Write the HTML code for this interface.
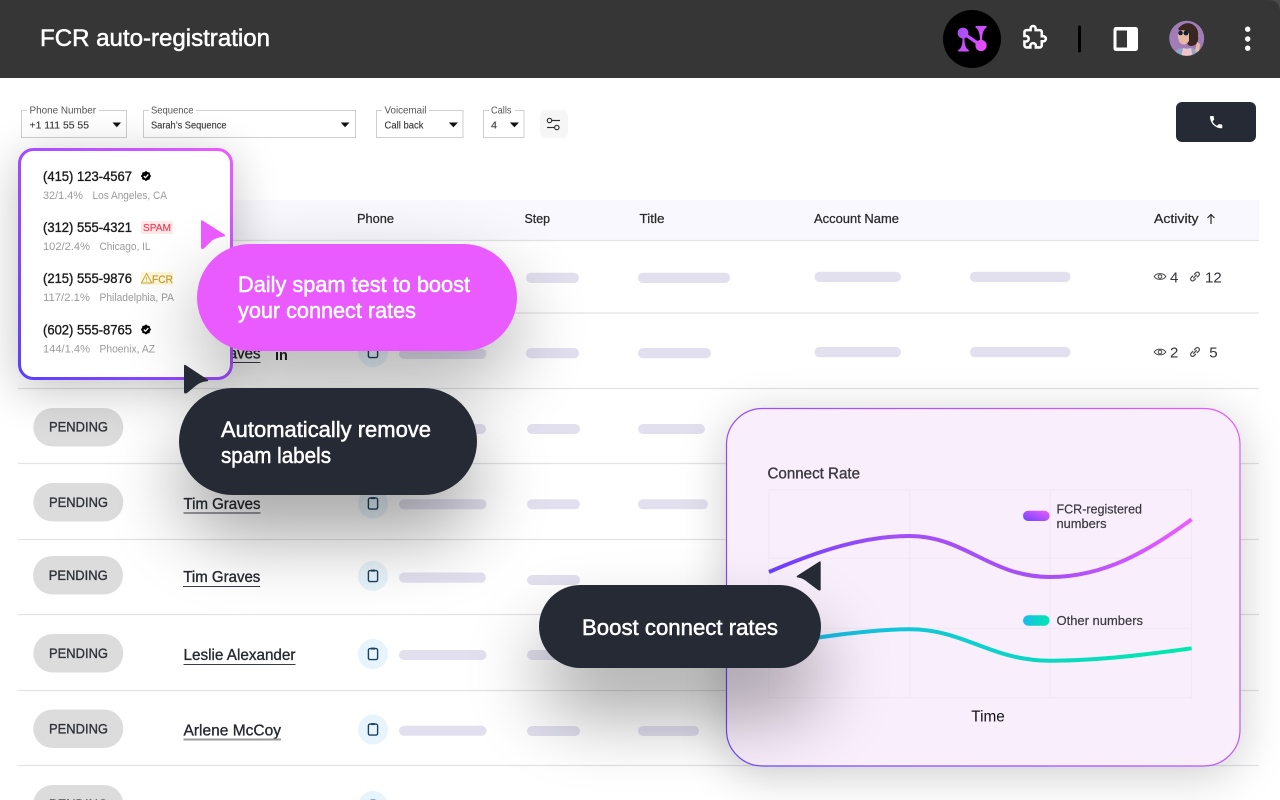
<!DOCTYPE html>
<html lang="en"><head><meta charset="utf-8"><title>FCR auto-registration</title>
<style>
html,body{margin:0;padding:0;background:#fff;width:1280px;height:800px;overflow:hidden}
svg{display:block;position:absolute;left:0;top:0}
text{font-family:"Liberation Sans",sans-serif;white-space:pre}
.m{stroke-width:.35px}
.t{stroke-width:.5px}
.lab{font-size:10.5px;fill:#555}
.val{font-size:10.5px;fill:#333;stroke:#333;stroke-width:.1px}
.hd{font-size:13px;fill:#2a2a2a;stroke:#2a2a2a;stroke-width:.25px}
.pn{font-size:13.5px;fill:#1b1b1b;stroke:#1b1b1b}
.sb{font-size:11px;fill:#9b9b9b}
.pd{font-size:14px;fill:#2f3238;stroke:#2f3238}
.nm{font-size:16px;fill:#26292f;stroke:#26292f}
.wt{font-size:22.5px;fill:#fff;stroke:#fff}
.act{font-size:15px;fill:#30333a}
.b{fill:#e2e0ef}
.c{fill:#e8f4fb}
.ph{fill:none;stroke:#1e4060;stroke-width:1.4}
.ln{stroke:#e3e3e6;stroke-width:1.2}
.gr{stroke:#f1e7f4;stroke-width:1;fill:none}
</style></head>
<body>
<svg width="1280" height="800" viewBox="0 0 1280 800" xmlns="http://www.w3.org/2000/svg">
<defs>
<filter id="s20" filterUnits="userSpaceOnUse" x="-200" y="-200" width="1800" height="1300"><feGaussianBlur stdDeviation="24"/></filter>
<filter id="s30" filterUnits="userSpaceOnUse" x="-200" y="-200" width="1800" height="1300"><feGaussianBlur stdDeviation="38"/></filter>
<linearGradient id="gc" x1="1" y1="0" x2="0" y2="1"><stop offset="0" stop-color="#ea5cff"/><stop offset="1" stop-color="#5b3eff"/></linearGradient>
<linearGradient id="gch" gradientUnits="userSpaceOnUse" x1="1240" y1="408" x2="726" y2="766"><stop offset="0" stop-color="#e65cfb"/><stop offset="1" stop-color="#6a48fb"/></linearGradient>
<linearGradient id="g1" gradientUnits="userSpaceOnUse" x1="769" y1="0" x2="1191" y2="0"><stop offset="0" stop-color="#6a3fff"/><stop offset=".3" stop-color="#a24ff5"/><stop offset=".68" stop-color="#a650f6"/><stop offset="1" stop-color="#ee5cff"/></linearGradient>
<linearGradient id="g2" gradientUnits="userSpaceOnUse" x1="769" y1="0" x2="1191" y2="0"><stop offset="0" stop-color="#1cb6ec"/><stop offset="1" stop-color="#00e9ae"/></linearGradient>
<linearGradient id="l1" x1="0" y1="1" x2="1" y2="0"><stop offset="0" stop-color="#6a45ff"/><stop offset="1" stop-color="#f05cff"/></linearGradient>
<linearGradient id="l2" x1="0" y1="0" x2="1" y2="0"><stop offset="0" stop-color="#1cbcea"/><stop offset="1" stop-color="#00e8ae"/></linearGradient>
<linearGradient id="lg" gradientUnits="userSpaceOnUse" x1="957" y1="30" x2="987" y2="50"><stop offset="0" stop-color="#a24ff5"/><stop offset="1" stop-color="#f24cff"/></linearGradient>
<clipPath id="av"><circle cx="1186.7" cy="38.3" r="17.5"/></clipPath>
<g id="chk"><rect x="-3.8" y="-3.8" width="7.6" height="7.6" fill="#000" rx="1"/><rect x="-3.8" y="-3.8" width="7.6" height="7.6" fill="#000" rx="1" transform="rotate(45)"/><path d="M-2.2 0.1L-.6 1.7L2.3-1.4" fill="none" stroke="#fff" stroke-width="1.3"/></g>
<g id="pi"><rect x="-4.6" y="-5.4" width="9.2" height="11" rx="1.6" class="ph"/><path d="M-2-5.4H2" stroke="#1e4060" stroke-width="2"/></g>
<g id="eye"><path d="M-5.8 0C-3.5-3.8 3.5-3.8 5.8 0C3.5 3.8-3.5 3.8-5.8 0Z" fill="none" stroke="#444" stroke-width="1"/><circle r="1.8" fill="none" stroke="#444" stroke-width="1"/></g>
<g id="lnk" fill="none" stroke="#444" stroke-width="1.2" stroke-linecap="round"><path d="M-.6-2.2L1-3.8A1.9 1.9 0 0 1 3.8-1L2.2.6"/><path d="M.6 2.2L-1 3.8A1.9 1.9 0 0 1-3.8 1L-2.2-.6"/><path d="M-1.4 1.4L1.4-1.4"/></g>
</defs>

<!-- top bar -->
<rect width="1280" height="78" fill="#4a4a4a"/>
<path d="M0 0H1268Q1280 0 1280 12V78H0Z" fill="#363636"/>
<text x="40" y="46" font-size="24" fill="#fff" stroke="#fff" class="t" textLength="230" lengthAdjust="spacingAndGlyphs">FCR auto-registration</text>
<circle cx="972" cy="39" r="29" fill="#000"/>
<g fill="url(#lg)">
<circle cx="963" cy="33" r="5.4"/>
<circle cx="981" cy="45.5" r="5.6"/>
<path d="M958.5 51.5Q957.5 50 959 49.5Q962.5 47.5 962.5 38H964.5Q964.5 47.5 968 49.5Q969.5 50 968.5 51.5Z"/>
<path d="M975.5 27.5Q975 26 976.5 26H985.5Q987 26 986.5 27.5Q982 30 982 41H980Q980 30 975.5 27.5Z"/>
</g>
<path d="M963 33L981 45.5" stroke="url(#lg)" stroke-width="3.2" fill="none"/>
<g transform="translate(1022.4,25) scale(1.02)"><path d="M20.5 11H19V7c0-1.1-.9-2-2-2h-4V3.5C13 2.12 11.88 1 10.5 1S8 2.12 8 3.5V5H4c-1.1 0-1.99.9-1.99 2v3.8H3.5c1.49 0 2.7 1.21 2.7 2.7s-1.21 2.7-2.7 2.7H2V20c0 1.1.9 2 2 2h3.8v-1.5c0-1.49 1.21-2.7 2.7-2.7 1.49 0 2.7 1.21 2.7 2.7V22H17c1.1 0 2-.9 2-2v-4h1.5c1.38 0 2.5-1.12 2.5-2.5S21.88 11 20.5 11z" fill="none" stroke="#fff" stroke-width="2.5"/></g>
<rect x="1078" y="25.5" width="3" height="27" rx="1.5" fill="#000"/>
<rect x="1113.5" y="27" width="24.5" height="24" rx="2.5" fill="#fff"/>
<rect x="1116.5" y="30.5" width="10.5" height="17" fill="#363636"/>
<g clip-path="url(#av)">
<rect x="1168" y="20" width="38" height="38" fill="#a17cb7"/>
<path d="M1178 29Q1184 21 1192 24Q1199 28 1198 36Q1199 42 1195 45Q1191 47 1188 45L1183 33Z" fill="#3a2620"/>
<path d="M1178 32Q1183 28 1189 33L1189 41Q1185 47 1180 43Q1177 38 1178 32Z" fill="#e8b8a4"/>
<path d="M1172 58Q1174 49 1182 48L1192 48Q1198 49 1200 58Z" fill="#8fa7c8"/>
<path d="M1183 48Q1187 50 1191 48L1193 58H1181Z" fill="#f0c4c8"/>
<path d="M1195 51L1197 42L1200 44L1199 53Z" fill="#e8b8a4"/>
<circle cx="1180.5" cy="33" r="2.3" fill="#12202e"/><circle cx="1186" cy="33" r="2.5" fill="#12202e"/>
</g>
<circle cx="1247.7" cy="29.2" r="2.7" fill="#fff"/><circle cx="1247.7" cy="39" r="2.7" fill="#fff"/><circle cx="1247.7" cy="48.2" r="2.7" fill="#fff"/>

<!-- filters -->
<g fill="none" stroke="#cfcfcf" stroke-width="1">
<rect x="21.5" y="110.5" width="105" height="27"/>
<rect x="143.5" y="110.5" width="212" height="27"/>
<rect x="376.5" y="110.5" width="86.5" height="27"/>
<rect x="483.5" y="110.5" width="40.5" height="27"/>
</g>
<g fill="#fff"><rect x="27" y="108" width="72" height="5"/><rect x="149" y="108" width="47" height="5"/><rect x="382" y="108" width="47" height="5"/><rect x="489" y="108" width="26" height="5"/></g>
<text class="lab" x="29.5" y="113.5" textLength="66.5" lengthAdjust="spacingAndGlyphs">Phone Number</text>
<text class="lab" x="151" y="113.5" textLength="42.5" lengthAdjust="spacingAndGlyphs">Sequence</text>
<text class="lab" x="384.5" y="113.5" textLength="42" lengthAdjust="spacingAndGlyphs">Voicemail</text>
<text class="lab" x="491" y="113.5" textLength="20.5" lengthAdjust="spacingAndGlyphs">Calls</text>
<text class="val" x="29.5" y="128.3" textLength="59.5" lengthAdjust="spacingAndGlyphs">+1 111 55 55</text>
<text class="val" x="151" y="128.3" textLength="75.5" lengthAdjust="spacingAndGlyphs">Sarah’s Sequence</text>
<text class="val" x="384.5" y="128.3" textLength="39" lengthAdjust="spacingAndGlyphs">Call back</text>
<text class="val" x="491" y="128.3" textLength="6" lengthAdjust="spacingAndGlyphs">4</text>
<g fill="#111"><path d="M112.5 122.5H121L116.8 127.3Z"/><path d="M340.8 122.5H349.5L345 127.3Z"/><path d="M448.8 122.5H458L453.4 127.3Z"/><path d="M509.8 122.5H519L514.4 127.3Z"/></g>
<rect x="540" y="110" width="28" height="28" rx="6" fill="#f6f6f6"/>
<g fill="none" stroke="#333" stroke-width="1.2"><circle cx="549.5" cy="120.5" r="2.2"/><path d="M552 120.5H560"/><circle cx="556.8" cy="127.5" r="2.2"/><path d="M547 127.5H554.5"/></g>
<rect x="1176" y="102" width="80" height="40" rx="6" fill="#252a35"/>
<path transform="translate(1208,114) scale(.68)" fill="#fff" d="M6.62 10.79c1.44 2.83 3.76 5.14 6.59 6.59l2.2-2.2c.27-.27.67-.36 1.02-.24 1.12.37 2.33.57 3.57.57.55 0 1 .45 1 1V20c0 .55-.45 1-1 1-9.39 0-17-7.61-17-17 0-.55.45-1 1-1h3.5c.55 0 1 .45 1 1 0 1.25.2 2.45.57 3.57.11.35.03.74-.25 1.02l-2.2 2.2z"/>

<!-- table -->
<rect x="18" y="200" width="1241" height="40" fill="#f9f8fe"/>
<g class="ln">
<line x1="18" x2="1259" y1="240.5" y2="240.5"/><line x1="18" x2="1259" y1="313" y2="313"/><line x1="18" x2="1259" y1="388.5" y2="388.5"/><line x1="18" x2="1259" y1="463.5" y2="463.5"/><line x1="18" x2="1259" y1="539.5" y2="539.5"/><line x1="18" x2="1259" y1="614.5" y2="614.5"/><line x1="18" x2="1259" y1="690.5" y2="690.5"/><line x1="18" x2="1259" y1="765.5" y2="765.5"/>
</g>
<text class="hd" x="357" y="223" textLength="37" lengthAdjust="spacingAndGlyphs">Phone</text>
<text class="hd" x="524.5" y="223" textLength="25.5" lengthAdjust="spacingAndGlyphs">Step</text>
<text class="hd" x="639.5" y="223" textLength="25" lengthAdjust="spacingAndGlyphs">Title</text>
<text class="hd" x="814" y="223" textLength="85" lengthAdjust="spacingAndGlyphs">Account Name</text>
<text class="hd" x="1154" y="223" textLength="44.5" lengthAdjust="spacingAndGlyphs">Activity</text>
<path d="M1211 224V214.5M1207.5 218L1211 214.5L1214.5 218" fill="none" stroke="#2a2a2a" stroke-width="1.2"/>

<!-- bars -->
<rect class="b" x="526" y="272.7" width="53" height="10.3" rx="5"/><rect class="b" x="638" y="272.7" width="92" height="10.3" rx="5"/><rect class="b" x="814.5" y="271.7" width="86.5" height="10.3" rx="5"/><rect class="b" x="970" y="271.7" width="100.5" height="10.3" rx="5"/>
<rect class="b" x="399" y="348.7" width="87.5" height="10.3" rx="5"/><rect class="b" x="526" y="348" width="53" height="10.3" rx="5"/><rect class="b" x="638" y="348" width="73" height="10.3" rx="5"/><rect class="b" x="814.5" y="347" width="86.5" height="10.3" rx="5"/><rect class="b" x="970" y="347" width="100.5" height="10.3" rx="5"/>
<rect class="b" x="399" y="424" width="87" height="10" rx="5"/><rect class="b" x="527" y="424" width="53" height="10" rx="5"/><rect class="b" x="638" y="424" width="67" height="10" rx="5"/>
<rect class="b" x="399" y="499.3" width="87.5" height="10" rx="5"/><rect class="b" x="527" y="499.3" width="53" height="10" rx="5"/><rect class="b" x="638" y="499.3" width="70" height="10" rx="5"/>
<rect class="b" x="399" y="572.5" width="87" height="10.3" rx="5"/><rect class="b" x="527" y="575" width="53" height="10" rx="5"/>
<rect class="b" x="399" y="650" width="87.5" height="10" rx="5"/><rect class="b" x="527" y="650" width="53" height="10" rx="5"/>
<rect class="b" x="399" y="725.8" width="87.5" height="10" rx="5"/><rect class="b" x="527" y="726" width="53" height="10" rx="5"/><rect class="b" x="638" y="726" width="61" height="10" rx="5"/>

<!-- phone circles -->
<circle class="c" cx="373" cy="352" r="15"/><use href="#pi" x="373" y="352"/>
<circle class="c" cx="373" cy="503.5" r="15"/><use href="#pi" x="373" y="503.5"/>
<circle class="c" cx="373" cy="576" r="15"/><use href="#pi" x="373" y="576"/>
<circle class="c" cx="373" cy="654" r="15"/><use href="#pi" x="373" y="654"/>
<circle class="c" cx="373" cy="729.5" r="15"/><use href="#pi" x="373" y="729.5"/>
<circle class="c" cx="373" cy="806" r="15"/><use href="#pi" x="373" y="806"/>

<!-- pending -->
<g fill="#dcdcdc">
<rect x="33.3" y="408" width="90" height="38.5" rx="19.2"/><rect x="33.3" y="483" width="90" height="38.5" rx="19.2"/><rect x="33" y="556" width="90" height="38.5" rx="19.2"/><rect x="33.3" y="634" width="90" height="38.5" rx="19.2"/><rect x="33.3" y="709.5" width="90" height="38.5" rx="19.2"/><rect x="33.3" y="785" width="90" height="38.5" rx="19.2"/>
</g>
<text class="pd m" x="49" y="431.7" textLength="59" lengthAdjust="spacingAndGlyphs">PENDING</text>
<text class="pd m" x="49" y="507" textLength="59" lengthAdjust="spacingAndGlyphs">PENDING</text>
<text class="pd m" x="48.7" y="580" textLength="59" lengthAdjust="spacingAndGlyphs">PENDING</text>
<text class="pd m" x="49" y="658" textLength="59" lengthAdjust="spacingAndGlyphs">PENDING</text>
<text class="pd m" x="49" y="733.7" textLength="59" lengthAdjust="spacingAndGlyphs">PENDING</text>
<text class="pd m" x="49" y="809" textLength="59" lengthAdjust="spacingAndGlyphs">PENDING</text>

<!-- names -->
<text class="nm m" x="183.5" y="358.5" textLength="77" lengthAdjust="spacingAndGlyphs">Tim Graves</text><line x1="183.5" x2="260.5" y1="362.5" y2="362.5" stroke="#3a3d44" stroke-width="1"/>
<text x="275" y="360" font-size="14.5" font-weight="700" fill="#222">in</text>
<text class="nm m" x="183.5" y="509" textLength="77" lengthAdjust="spacingAndGlyphs">Tim Graves</text><line x1="183.5" x2="260.5" y1="513" y2="513" stroke="#3a3d44" stroke-width="1"/>
<text class="nm m" x="183.3" y="582" textLength="77" lengthAdjust="spacingAndGlyphs">Tim Graves</text><line x1="183" x2="260" y1="586.5" y2="586.5" stroke="#3a3d44" stroke-width="1"/>
<text class="nm m" x="183.5" y="660" textLength="112" lengthAdjust="spacingAndGlyphs">Leslie Alexander</text><line x1="183.5" x2="295.5" y1="664.5" y2="664.5" stroke="#3a3d44" stroke-width="1"/>
<text class="nm m" x="183.5" y="735.5" textLength="97.5" lengthAdjust="spacingAndGlyphs">Arlene McCoy</text><line x1="183.5" x2="281" y1="739.5" y2="739.5" stroke="#9a9a9e" stroke-width="2"/>
<text class="nm m" x="183.5" y="813" textLength="90" lengthAdjust="spacingAndGlyphs">Jenny Wilson</text>
<text class="nm" x="670" y="813" textLength="26" lengthAdjust="spacingAndGlyphs">Title</text>

<!-- activity -->
<use href="#eye" x="1160" y="276.5"/><text class="act" x="1170" y="282.3">4</text><use href="#lnk" x="1195" y="276.5"/><text class="act" x="1205" y="282.3">12</text>
<use href="#eye" x="1160" y="352"/><text class="act" x="1170" y="357.5">2</text><use href="#lnk" x="1195" y="352"/><text class="act" x="1209.3" y="357.5">5</text>
<text class="act" x="1170" y="811">1</text><text class="act" x="1205" y="811">1</text>

<!-- chart card -->
<rect x="726" y="416" width="514" height="358" rx="36" fill="#000" opacity=".2" filter="url(#s20)"/>
<rect x="726.5" y="408.5" width="513.5" height="357.5" rx="36" fill="#f9eefc" stroke="url(#gch)" stroke-width="1.2"/>
<text x="767.5" y="478.3" font-size="16" fill="#3a3a3e" stroke="#3a3a3e" class="m" textLength="92.5" lengthAdjust="spacingAndGlyphs">Connect Rate</text>
<g class="gr"><rect x="769" y="490" width="422.6" height="207.7"/><path d="M909.6 490V697.7M1050.3 490V697.7M769 558.3H1191.6M769 628.3H1191.6"/></g>
<path d="M769 572C820 550 865 536 909.6 536C965 536 990 577 1050 577C1105 577 1150 550 1191.6 519.3" fill="none" stroke="url(#g1)" stroke-width="4"/>
<path d="M769 645C820 637 870 629.3 909.6 629.3C965 629.3 990 660.7 1050 660.7C1100 660.7 1150 654 1191.6 648.3" fill="none" stroke="url(#g2)" stroke-width="4"/>
<rect x="1023" y="510.7" width="26.6" height="10.3" rx="5.1" fill="url(#l1)"/>
<rect x="1023" y="615.3" width="26.6" height="10.4" rx="5.2" fill="url(#l2)"/>
<text x="1056.5" y="513.3" font-size="13" fill="#3a3a3e" stroke="#3a3a3e" stroke-width=".2" textLength="85.5" lengthAdjust="spacingAndGlyphs">FCR-registered</text>
<text x="1056.5" y="528" font-size="13" fill="#3a3a3e" stroke="#3a3a3e" stroke-width=".2" textLength="50" lengthAdjust="spacingAndGlyphs">numbers</text>
<text x="1056.5" y="625" font-size="13" fill="#3a3a3e" stroke="#3a3a3e" stroke-width=".2" textLength="86.5" lengthAdjust="spacingAndGlyphs">Other numbers</text>
<text x="971.3" y="721.7" font-size="15.5" fill="#111" textLength="33.5" lengthAdjust="spacingAndGlyphs">Time</text>

<!-- popup -->
<rect x="18" y="158" width="215" height="232" rx="14" fill="#000" opacity=".24" filter="url(#s20)"/>
<rect x="19.5" y="149.5" width="212" height="229" rx="14" fill="#fff" stroke="url(#gc)" stroke-width="3"/>
<text class="pn m" x="43" y="181" textLength="89" lengthAdjust="spacingAndGlyphs">(415) 123-4567</text><use href="#chk" x="146" y="176"/>
<text class="sb" x="43" y="199" textLength="40" lengthAdjust="spacingAndGlyphs">32/1.4%</text><text class="sb" x="92.5" y="199" textLength="74.5" lengthAdjust="spacingAndGlyphs">Los Angeles, CA</text>
<text class="pn m" x="43" y="232" textLength="89" lengthAdjust="spacingAndGlyphs">(312) 555-4321</text>
<rect x="141" y="221" width="32" height="13" rx="1.5" fill="#fde8ea"/><text x="143" y="231.2" font-size="10.5" fill="#e8455a" stroke="#e8455a" stroke-width=".2" textLength="28" lengthAdjust="spacingAndGlyphs">SPAM</text>
<text class="sb" x="43" y="250" textLength="47" lengthAdjust="spacingAndGlyphs">102/2.4%</text><text class="sb" x="99.5" y="250" textLength="51" lengthAdjust="spacingAndGlyphs">Chicago, IL</text>
<text class="pn m" x="43" y="283" textLength="89" lengthAdjust="spacingAndGlyphs">(215) 555-9876</text>
<rect x="141" y="272" width="32" height="13" rx="1.5" fill="#fdf6d8"/><path d="M146.6 273.5L151.8 283H141.4Z" fill="none" stroke="#c9a83a" stroke-width="1"/><path d="M146.6 277V280.5M146.6 281.3V282" stroke="#c9a83a" stroke-width=".8"/><text x="152" y="282.8" font-size="11" fill="#c2a033" stroke="#c2a033" stroke-width=".2" textLength="21" lengthAdjust="spacingAndGlyphs">FCR</text>
<text class="sb" x="43" y="301" textLength="47" lengthAdjust="spacingAndGlyphs">117/2.1%</text><text class="sb" x="99.5" y="301" textLength="74.5" lengthAdjust="spacingAndGlyphs">Philadelphia, PA</text>
<text class="pn m" x="43" y="334.5" textLength="89" lengthAdjust="spacingAndGlyphs">(602) 555-8765</text><use href="#chk" x="146" y="329.5"/>
<text class="sb" x="43" y="352.5" textLength="47" lengthAdjust="spacingAndGlyphs">144/1.4%</text><text class="sb" x="99.5" y="352.5" textLength="55.5" lengthAdjust="spacingAndGlyphs">Phoenix, AZ</text>

<!-- pink pill -->
<rect x="197" y="275" width="320" height="107" rx="53.5" fill="#000" opacity=".3" filter="url(#s30)"/>
<path d="M202.5 220.5L224.5 234.5Q226 236 224 236.5Q216 237.5 211.5 241L204 248.5Q201 250 201 247V222Q201 219.5 202.5 220.5Z" fill="#e95bff"/>
<rect x="197" y="244" width="320" height="107" rx="53.5" fill="#e95bff"/>
<text class="wt t" x="238" y="292" textLength="232" lengthAdjust="spacingAndGlyphs">Daily spam test to boost</text>
<text class="wt t" x="238" y="318" textLength="178" lengthAdjust="spacingAndGlyphs">your connect rates</text>

<!-- dark pill -->
<rect x="179" y="428" width="298" height="107" rx="53.5" fill="#000" opacity=".36" filter="url(#s30)"/>
<path d="M185.5 365L207.5 379.5Q209 381 207 381.3Q200 382 195.5 386L187 393Q184 394.5 184 391.5V366.5Q184 364 185.5 365Z" fill="#252a35"/>
<rect x="179" y="388" width="298" height="107" rx="53.5" fill="#252a35"/>
<text class="wt t" x="221" y="437" textLength="210" lengthAdjust="spacingAndGlyphs">Automatically remove</text>
<text class="wt t" x="221" y="463" textLength="110" lengthAdjust="spacingAndGlyphs">spam labels</text>

<!-- boost pill -->
<rect x="539" y="630" width="282" height="83" rx="41.5" fill="#000" opacity=".36" filter="url(#s30)"/>
<path d="M819.5 561.5L797.5 575.5Q795.5 577 798 577.5Q803 578 808 582.5L818 590Q820.7 591.5 820.7 589V563Q820.7 560.5 819.5 561.5Z" fill="#252a35"/>
<rect x="539" y="585" width="282" height="83" rx="41.5" fill="#252a35"/>
<text class="wt t" x="582" y="635" textLength="196" lengthAdjust="spacingAndGlyphs">Boost connect rates</text>
</svg>
</body></html>
